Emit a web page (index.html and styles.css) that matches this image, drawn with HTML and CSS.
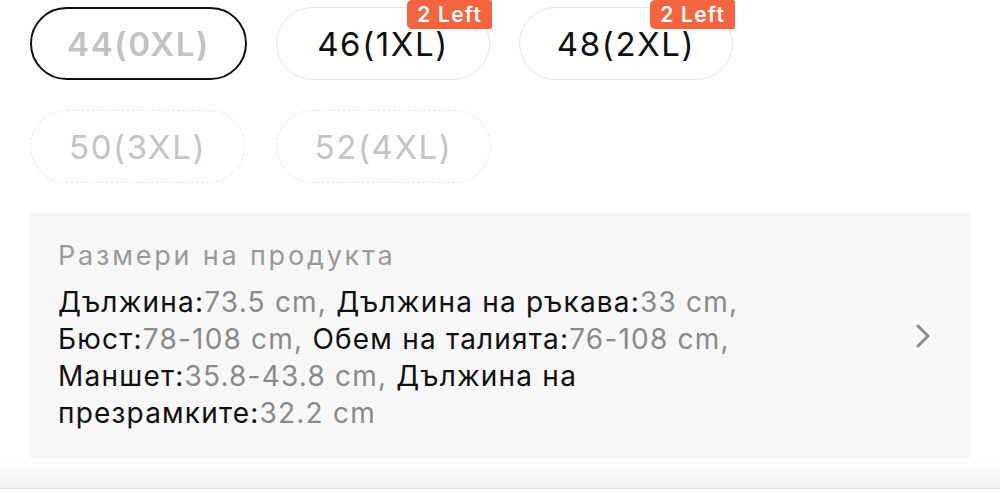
FILE: index.html
```html
<!DOCTYPE html>
<html lang="bg">
<head>
<meta charset="utf-8">
<link rel="stylesheet" href="styles.css">
</head>
<body>
<div class="page">
  <div class="sizes">
    <div class="size-row">
      <div class="pill pill-selected">44(0XL)</div>
      <div class="pill pill-stock">46(1XL)<span class="badge">2 Left</span></div>
      <div class="pill pill-stock">48(2XL)<span class="badge">2 Left</span></div>
    </div>
    <div class="size-row size-row-wide">
      <div class="pill pill-off">50(3XL)</div>
      <div class="pill pill-off">52(4XL)</div>
    </div>
  </div>
  <div class="measures">
    <div class="measures-text">
      <div class="measures-title">Размери на продукта</div>
      <div class="measures-body">
        <span class="line"><span class="k">Дължина:</span><span class="v">73.5 cm,</span> <span class="k">Дължина на ръкава:</span><span class="v">33 cm,</span></span>
        <span class="line"><span class="k">Бюст:</span><span class="v">78-108 cm,</span> <span class="k">Обем на талията:</span><span class="v">76-108 cm,</span></span>
        <span class="line"><span class="k">Маншет:</span><span class="v">35.8-43.8 cm,</span> <span class="k">Дължина на</span></span>
        <span class="line"><span class="k">презрамките:</span><span class="v">32.2 cm</span></span>
      </div>
    </div>
    <svg class="chevron" width="18" height="26" viewBox="0 0 18 26"><path d="M4 3 L14 13 L4 23" fill="none" stroke="#8c8c8c" stroke-width="3" stroke-linecap="round" stroke-linejoin="round"/></svg>
  </div>
  <div class="footer-shadow"></div>
</div>
</body>
</html>
```

FILE: styles.css
```css
html, body {
  margin: 0;
  padding: 0;
  background: #ffffff;
}
body {
  font-family: Inter, "Noto Sans", "Liberation Sans", sans-serif;
  color: #111111;
}
.page {
  width: 1000px;
  height: 492px;
  overflow: hidden;
  display: flex;
  flex-direction: column;
}
.sizes {
  padding: 7px 0 0 30px;
  display: flex;
  flex-direction: column;
  gap: 30px;
}
.size-row {
  display: flex;
  gap: 29px;
}
.size-row-wide {
  gap: 31px;
}
.pill {
  position: relative;
  box-sizing: border-box;
  width: 214px;
  height: 73px;
  border-radius: 37px;
  border: 1.5px solid #e6e6e6;
  display: flex;
  align-items: center;
  justify-content: center;
  font-size: 33px;
  letter-spacing: 1.6px;
}
.pill-selected {
  width: 217px;
  border: 2.5px solid #111111;
  color: #c2c2c2;
  font-weight: 600;
}
.pill-stock {
  color: #111111;
  font-weight: 400;
}
.pill-off {
  width: 215px;
  border: 1.5px dashed #e6e6e6;
  color: #c4c4c4;
  font-weight: 400;
}
.badge {
  position: absolute;
  top: -8px;
  right: -3px;
  height: 29px;
  padding: 0 10px;
  background: #f4643f;
  color: #ffffff;
  font-size: 21px;
  font-weight: 600;
  line-height: 29px;
  letter-spacing: 1.2px;
  border-radius: 5px 2px 2px 5px;
}
.measures {
  margin: 30px 30px 0 30px;
  height: 245px;
  background: #f7f7f7;
  display: flex;
  align-items: center;
  justify-content: space-between;
  padding: 0 38px 0 28px;
}
.measures-text {
  display: flex;
  flex-direction: column;
}
.measures-title {
  color: #9a9a9a;
  font-size: 27px;
  line-height: 32px;
  letter-spacing: 2.8px;
  margin-bottom: 12px;
}
.measures-body {
  display: flex;
  flex-direction: column;
  font-size: 28px;
  line-height: 37px;
  letter-spacing: 1.2px;
}
.line {
  white-space: nowrap;
}
.k {
  color: #111111;
}
.v {
  color: #8a8a8a;
}
.chevron {
  flex: none;
}
.footer-shadow {
  margin-top: 2px;
  height: 28px;
  background: linear-gradient(to bottom, #ffffff, #f2f2f2);
  border-bottom: 1px solid #e2e2e2;
}
```
